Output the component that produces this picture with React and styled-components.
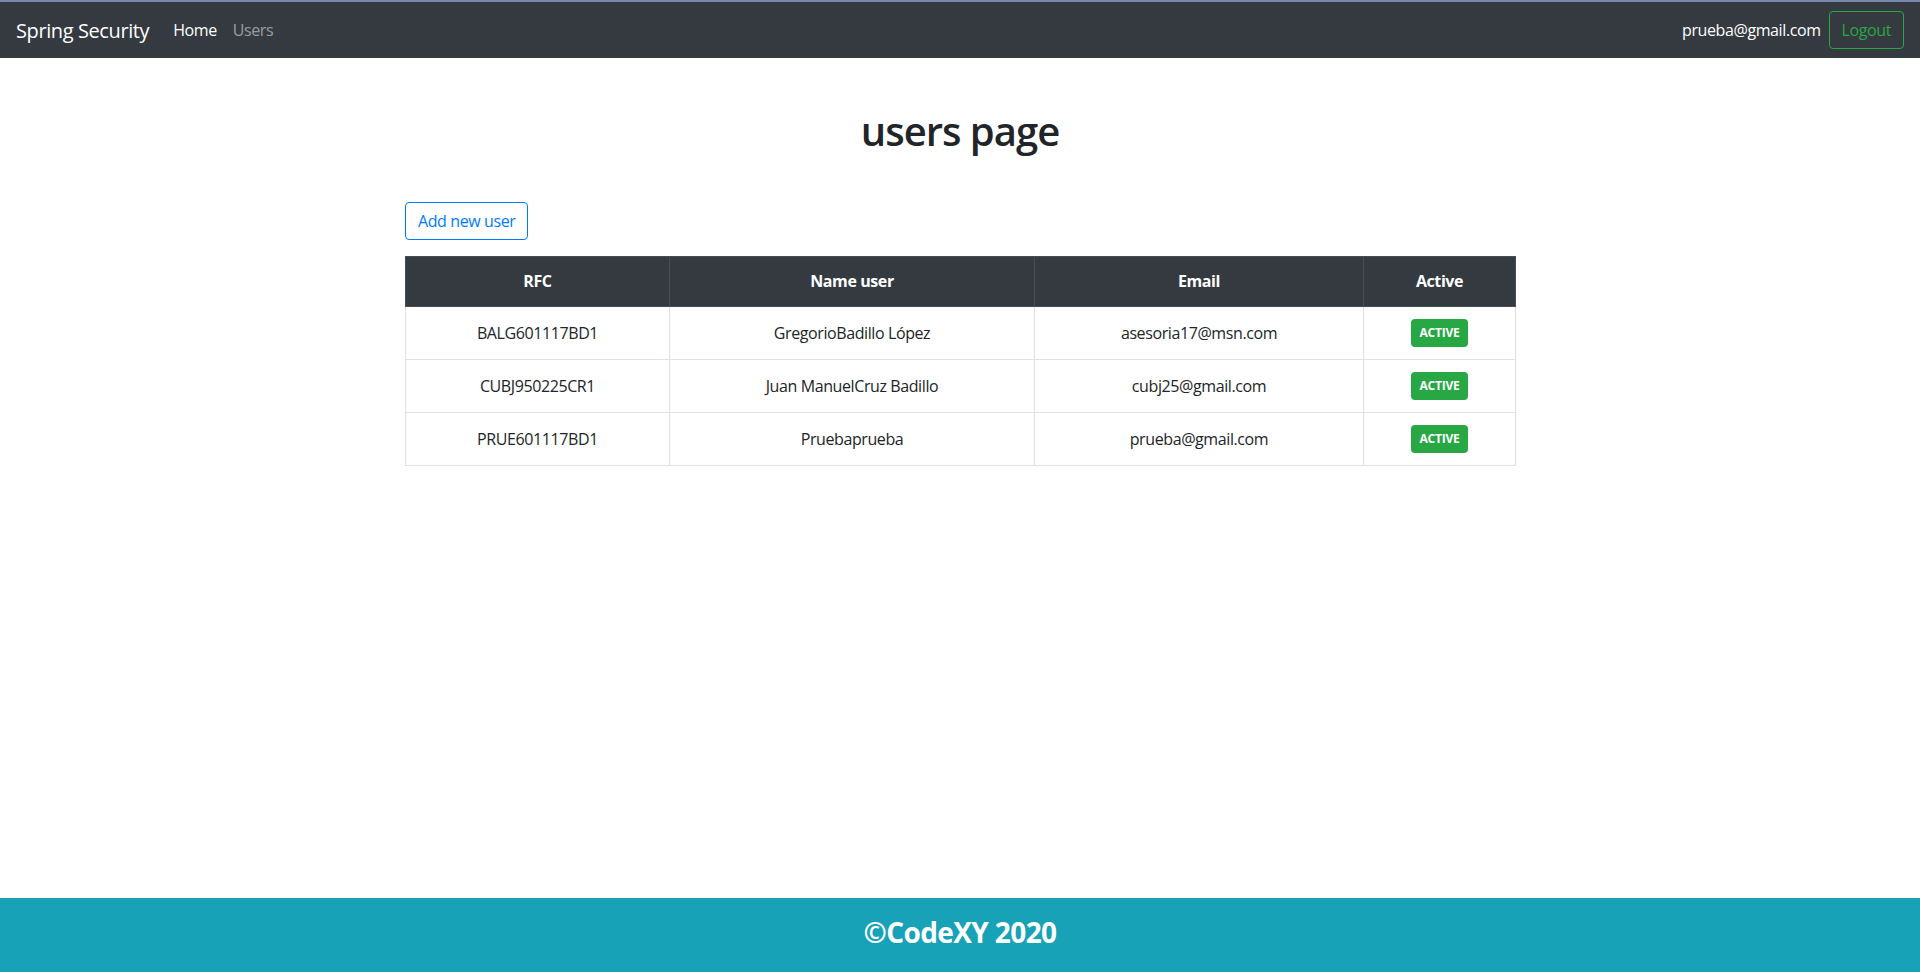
import React from 'react';
import styled, { createGlobalStyle } from 'styled-components';

const GlobalStyle = createGlobalStyle`
  body {
    margin: 0;
    font-family: "Segoe UI", "Open Sans", "Noto Sans", sans-serif;
    font-size: 16px;
    letter-spacing: -0.4px;
    color: #212529;
    background: #fff;
  }
`

const Navbar = styled.nav`
  display: flex;
  align-items: center;
  height: 56px;
  border-top: 2px solid #7488ab;
  background: #343a40;
  padding: 0 16px;
`

const Brand = styled.a`
  font-size: 20px;
  color: #fff;
  margin-right: 16px;
  text-decoration: none;
`

const NavLink = styled.a`
  padding: 0 8px;
  font-size: 16px;
  text-decoration: none;
  color: ${p => (p.active ? '#fff' : 'rgba(255,255,255,.5)')};
`

const Spacer = styled.div`
  flex: 1;
`

const UserEmail = styled.span`
  color: #fff;
  margin-right: 8px;
`

const OutlineBtn = styled.button`
  font-family: inherit;
  font-size: 16px;
  letter-spacing: -0.4px;
  line-height: 24px;
  padding: 6px 12px;
  background: transparent;
  border: 1px solid ${p => p.color};
  color: ${p => p.color};
  border-radius: 4px;
  cursor: pointer;
`

const Main = styled.main`
  width: 1110px;
  margin: 0 auto;
  padding-bottom: 100px;
`

const Title = styled.h1`
  text-align: center;
  font-size: 40px;
  font-weight: 600;
  letter-spacing: -1px;
  line-height: 48px;
  margin: 49px 0 47px;
`

const Table = styled.table`
  width: 100%;
  margin-top: 16px;
  border-collapse: collapse;
  table-layout: fixed;
  text-align: center;
  th {
    background: #343a40;
    color: #fff;
    font-weight: 700;
    border: 1px solid #454d55;
    padding: 12px 12px 13px;
    line-height: 24px;
  }
  td {
    border: 1px solid #dee2e6;
    padding: 12px;
    height: 28px;
    line-height: 24px;
  }
`

const Col = styled.col`
  width: ${p => p.w}px;
`

const Badge = styled.span`
  display: inline-block;
  background: #28a745;
  color: #fff;
  font-size: 12px;
  font-weight: 700;
  letter-spacing: -0.2px;
  line-height: 16px;
  padding: 6px 8px;
  border-radius: 4px;
  vertical-align: middle;
`

const Footer = styled.footer`
  position: fixed;
  left: 0;
  right: 0;
  bottom: 0;
  height: 74px;
  box-sizing: border-box;
  padding-bottom: 6px;
  background: #17a2b8;
  color: #fff;
  display: flex;
  align-items: center;
  justify-content: center;
  font-size: 28px;
  font-weight: 700;
  letter-spacing: -0.6px;
`

const users = [
  { rfc: 'BALG601117BD1', name: 'GregorioBadillo López', email: 'asesoria17@msn.com' },
  { rfc: 'CUBJ950225CR1', name: 'Juan ManuelCruz Badillo', email: 'cubj25@gmail.com' },
  { rfc: 'PRUE601117BD1', name: 'Pruebaprueba', email: 'prueba@gmail.com' },
]

const App = () => {
  return (
    <>
      <GlobalStyle />
      <Navbar>
        <Brand href="#">Spring Security</Brand>
        <NavLink href="#" active>Home</NavLink>
        <NavLink href="#">Users</NavLink>
        <Spacer />
        <UserEmail>prueba@gmail.com</UserEmail>
        <OutlineBtn color="#28a745">Logout</OutlineBtn>
      </Navbar>
      <Main>
        <Title>users page</Title>
        <OutlineBtn color="#007bff">Add new user</OutlineBtn>
        <Table>
          <colgroup>
            <Col w={264} />
            <Col w={365} />
            <Col w={329} />
            <Col w={152} />
          </colgroup>
          <thead>
            <tr>
              <th>RFC</th>
              <th>Name user</th>
              <th>Email</th>
              <th>Active</th>
            </tr>
          </thead>
          <tbody>
            {users.map(u => (
              <tr key={u.rfc}>
                <td>{u.rfc}</td>
                <td>{u.name}</td>
                <td>{u.email}</td>
                <td><Badge>ACTIVE</Badge></td>
              </tr>
            ))}
          </tbody>
        </Table>
      </Main>
      <Footer>©CodeXY 2020</Footer>
    </>
  );
}

export default App;
